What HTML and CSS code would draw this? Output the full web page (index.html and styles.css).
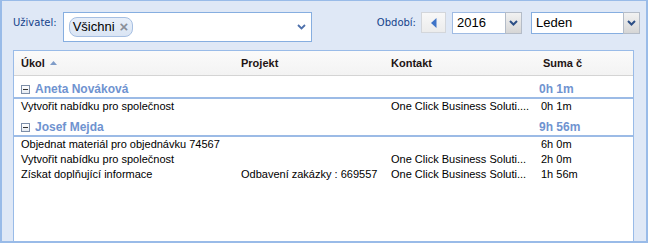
FILE: index.html
```html
<!DOCTYPE html>
<html>
<head>
<meta charset="utf-8">
<link rel="stylesheet" href="styles.css">
</head>
<body>
<div class="panel">
  <div class="toolbar">
    <div class="tb-left">
      <span class="lbl">Uživatel:</span>
      <div class="tagfield">
        <span class="tag">Všichni <span class="tag-x">×</span></span>
        <svg class="chev" width="9" height="6" viewBox="0 0 9 6"><path d="M1 1 L4.5 4.5 L8 1" fill="none" stroke="#4d70ab" stroke-width="1.8"/></svg>
      </div>
    </div>
    <div class="tb-right">
      <span class="lbl">Období:</span>
      <div class="prevbtn"><svg width="6" height="10" viewBox="0 0 6 10"><path d="M5.5 0 L0 5 L5.5 10 Z" fill="#3f74c8"/></svg></div>
      <div class="combo year">
        <span class="combo-input">2016</span>
        <span class="trigger"><svg width="9" height="6" viewBox="0 0 9 6"><path d="M1 1 L4.5 4.5 L8 1" fill="none" stroke="#2d4f86" stroke-width="2"/></svg></span>
      </div>
      <div class="combo month">
        <span class="combo-input">Leden</span>
        <span class="trigger"><svg width="9" height="6" viewBox="0 0 9 6"><path d="M1 1 L4.5 4.5 L8 1" fill="none" stroke="#2d4f86" stroke-width="2"/></svg></span>
      </div>
    </div>
  </div>
  <div class="grid">
    <div class="ghead row4">
      <div class="hc">Úkol <svg class="sort" width="7" height="4" viewBox="0 0 7 4"><path d="M0 4 L3.5 0 L7 4 Z" fill="#7f9cc8"/></svg></div>
      <div class="hc">Projekt</div>
      <div class="hc">Kontakt</div>
      <div class="hc hc-sum">Suma č</div>
    </div>
    <div class="group row4">
      <div class="gname"><span class="collapse"></span>Aneta Nováková</div>
      <div></div>
      <div></div>
      <div class="gsum">0h 1m</div>
    </div>
    <div class="task row4">
      <div class="c">Vytvořit nabídku pro společnost</div>
      <div class="c"></div>
      <div class="c">One Click Business Soluti....</div>
      <div class="c">0h 1m</div>
    </div>
    <div class="group row4">
      <div class="gname"><span class="collapse"></span>Josef Mejda</div>
      <div></div>
      <div></div>
      <div class="gsum">9h 56m</div>
    </div>
    <div class="task row4">
      <div class="c">Objednat materiál pro objednávku 74567</div>
      <div class="c"></div>
      <div class="c"></div>
      <div class="c">6h 0m</div>
    </div>
    <div class="task row4">
      <div class="c">Vytvořit nabídku pro společnost</div>
      <div class="c"></div>
      <div class="c">One Click Business Soluti...</div>
      <div class="c">2h 0m</div>
    </div>
    <div class="task row4">
      <div class="c">Získat doplňující informace</div>
      <div class="c">Odbavení zakázky : 669557</div>
      <div class="c">One Click Business Soluti...</div>
      <div class="c">1h 56m</div>
    </div>
  </div>
</div>
</body>
</html>
```
FILE: styles.css
```css
* { box-sizing: border-box; }
html, body { margin: 0; padding: 0; }
body { width: 648px; height: 243px; overflow: hidden; font-family: "Liberation Sans", Arial, sans-serif; }

.panel {
  width: 648px;
  height: 243px;
  background: #dfe8f6;
  border-top: 1px solid #99bbe8;
  border-left: 2px solid #99bbe8;
  border-right: 2px solid #99bbe8;
  border-bottom: 2px solid #99bbe8;
  padding: 0 6px 0 11px;
  display: flex;
  flex-direction: column;
  overflow: hidden;
}

.toolbar {
  display: flex;
  justify-content: space-between;
  align-items: flex-start;
  padding-top: 11px;
  height: 49px;
}
.tb-left, .tb-right { display: flex; align-items: flex-start; }

.lbl {
  font-family: "DejaVu Sans", Verdana, sans-serif;
  font-size: 10px;
  color: #15428b;
  line-height: 22px;
}

.tagfield {
  margin-left: 6px;
  width: 249px;
  height: 30px;
  background: #fff;
  border: 1px solid #86aee0;
  display: flex;
  align-items: center;
  padding: 0 0 0 5px;
  position: relative;
}
.tag {
  height: 20px;
  border: 1px solid #a6bfe2;
  border-radius: 8px;
  background: linear-gradient(#e8eff9, #dae5f4);
  font-size: 13px;
  line-height: 18px;
  color: #000;
  padding: 0 6px 0 3px;
  display: inline-flex;
  align-items: center;
  width: 64px;
}
.tag-x {
  color: #8a8f99;
  font-weight: bold;
  font-size: 15px;
  margin-left: 5px;
}
.chev { position: absolute; right: 5px; top: 11px; }

.tb-right .lbl { margin-right: 5px; }
.prevbtn {
  width: 25px;
  height: 21px;
  border: 1px solid #d3d6db;
  background: linear-gradient(#f8f8f8, #ececec);
  display: flex;
  align-items: center;
  justify-content: center;
  margin-right: 6px;
}
.combo {
  display: flex;
  height: 22px;
}
.combo-input {
  background: #fff;
  border: 1px solid #9fbbe3;
  border-right: none;
  font-size: 13px;
  line-height: 20px;
  padding-left: 4px;
  color: #000;
}
.year .combo-input { width: 53px; }
.year { margin-right: 9px; }
.month .combo-input { width: 92px; border-color: #86aee0; }
.trigger {
  width: 17px;
  border: 1px solid #b4bcc8;
  background: linear-gradient(#f2f2f2, #d6d6d6);
  display: flex;
  align-items: center;
  justify-content: center;
}

.grid {
  flex: 1;
  margin-right: 6px;
  background: #fff;
  border: 1px solid #99bbe8;
  border-bottom: none;
  font-size: 11px;
  color: #000;
}
.row4 {
  display: grid;
  grid-template-columns: 220px 150px 150px 1fr;
}
.ghead {
  height: 25px;
  background: linear-gradient(#fafafa, #f3f3f3);
  border-bottom: 1px solid #d4d4d4;
}
.hc {
  font-weight: bold;
  color: #1e1414;
  line-height: 24px;
  padding-left: 7px;
  display: flex;
  align-items: center;
}
.hc-sum { padding-left: 9px; }
.sort { margin-left: 5px; }

.group {
  height: 23px;
  border-bottom: 2px solid #9cbbe6;
  padding-top: 6px;
}
.gname {
  display: flex;
  align-items: center;
  padding-left: 7px;
  font-size: 12px;
  font-weight: bold;
  color: #6f93d0;
  line-height: 15px;
}
.collapse {
  width: 9px;
  height: 9px;
  border: 1px solid #7d8ea8;
  background: linear-gradient(#fff, #e6ebf2);
  margin-right: 5px;
  position: relative;
}
.collapse::after {
  content: "";
  position: absolute;
  left: 1px;
  right: 1px;
  top: 3px;
  height: 1px;
  background: #333;
}
.gsum {
  font-size: 12px;
  font-weight: bold;
  color: #6f93d0;
  line-height: 15px;
  padding-left: 5px;
}
.task { height: 15px; }
.c {
  line-height: 15px;
  padding: 0 0 0 7px;
  white-space: nowrap;
  overflow: hidden;
}
```
